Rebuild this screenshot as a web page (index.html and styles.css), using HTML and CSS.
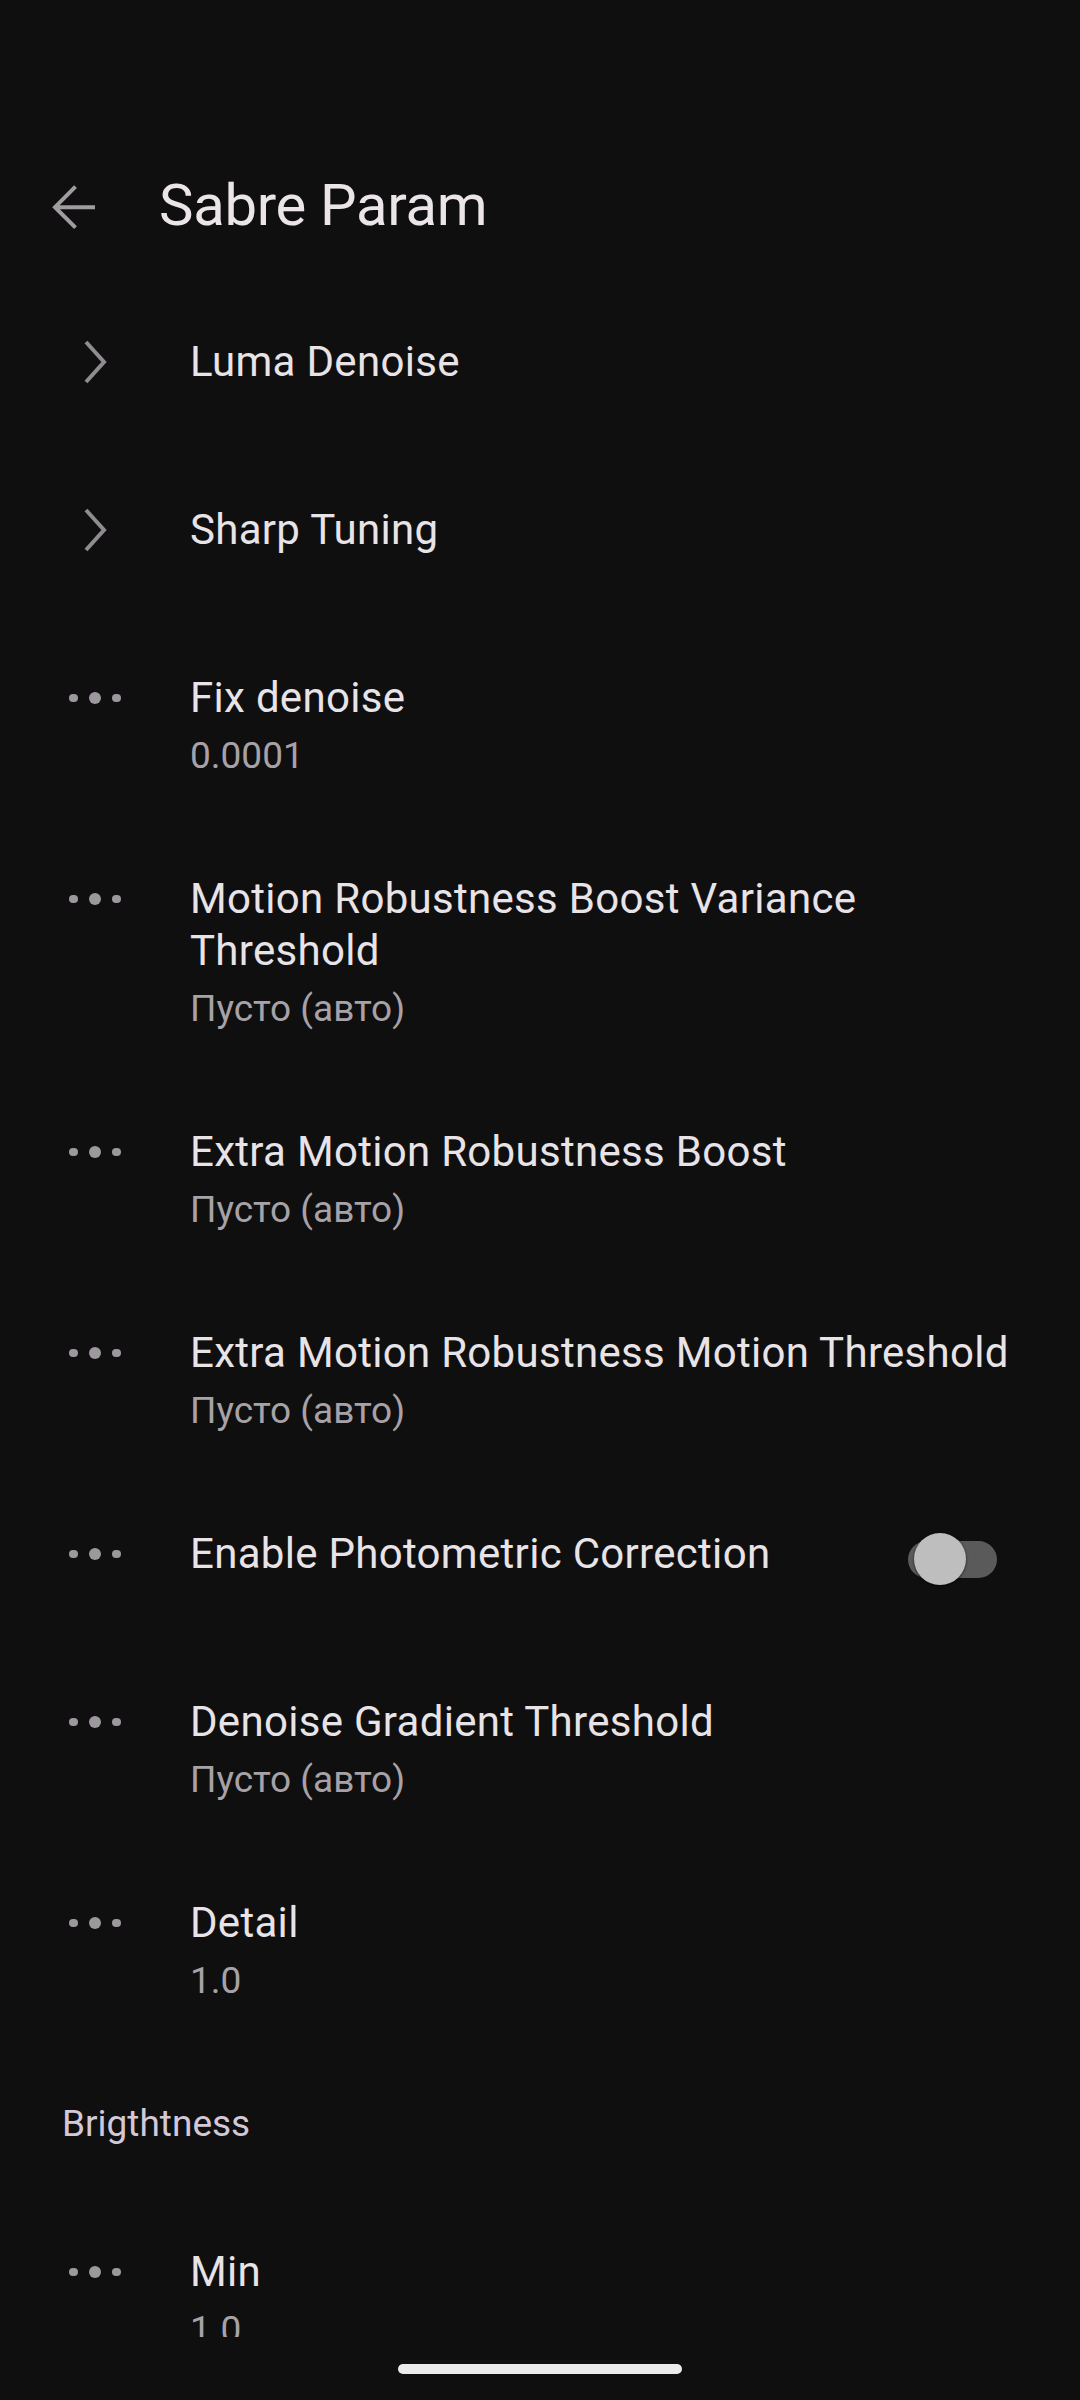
FILE: index.html
```html
<!DOCTYPE html>
<html lang="ru">
<head>
<meta charset="utf-8">
<title>Sabre Param</title>
<link rel="stylesheet" href="styles.css">
</head>
<body>
<div class="screen">
  <header class="appbar">
    <div class="toolbar">
      <div class="back">
        <svg width="63" height="63" viewBox="0 0 63 63"><path d="M53 33.2H13M33.5 12.7L13 33.2L33.5 53.7" fill="none" stroke="#a09ca2" stroke-width="4"/></svg>
      </div>
      <h1 class="title">Sabre Param</h1>
    </div>
  </header>
  <main class="list">
    <div class="item">
      <div class="icon"><svg class="chev" width="30" height="52" viewBox="0 0 30 52"><path d="M6 6L24 26L6 46" fill="none" stroke="#8f8b90" stroke-width="4"/></svg></div>
      <div class="text"><div class="t">Luma Denoise</div></div>
    </div>
    <div class="item">
      <div class="icon"><svg class="chev" width="30" height="52" viewBox="0 0 30 52"><path d="M6 6L24 26L6 46" fill="none" stroke="#8f8b90" stroke-width="4"/></svg></div>
      <div class="text"><div class="t">Sharp Tuning</div></div>
    </div>
    <div class="item two">
      <div class="icon"><span class="dots"><i></i><b></b><i></i></span></div>
      <div class="text"><div class="t">Fix denoise</div><div class="s">0.0001</div></div>
    </div>
    <div class="item two">
      <div class="icon"><span class="dots"><i></i><b></b><i></i></span></div>
      <div class="text"><div class="t">Motion Robustness Boost Variance Threshold</div><div class="s">Пусто (авто)</div></div>
    </div>
    <div class="item two">
      <div class="icon"><span class="dots"><i></i><b></b><i></i></span></div>
      <div class="text"><div class="t">Extra Motion Robustness Boost</div><div class="s">Пусто (авто)</div></div>
    </div>
    <div class="item two">
      <div class="icon"><span class="dots"><i></i><b></b><i></i></span></div>
      <div class="text"><div class="t">Extra Motion Robustness Motion Threshold</div><div class="s">Пусто (авто)</div></div>
    </div>
    <div class="item">
      <div class="icon"><span class="dots"><i></i><b></b><i></i></span></div>
      <div class="text"><div class="t">Enable Photometric Correction</div></div>
      <div class="switch"><span class="track"></span><span class="thumb"></span></div>
    </div>
    <div class="item two">
      <div class="icon"><span class="dots"><i></i><b></b><i></i></span></div>
      <div class="text"><div class="t">Denoise Gradient Threshold</div><div class="s">Пусто (авто)</div></div>
    </div>
    <div class="item two">
      <div class="icon"><span class="dots"><i></i><b></b><i></i></span></div>
      <div class="text"><div class="t">Detail</div><div class="s">1.0</div></div>
    </div>
    <div class="category">Brigthtness</div>
    <div class="item two">
      <div class="icon"><span class="dots"><i></i><b></b><i></i></span></div>
      <div class="text"><div class="t">Min</div><div class="s">1.0</div></div>
    </div>
  </main>
  <footer class="navbar"><span class="handle"></span></footer>
</div>
</body>
</html>
```
FILE: styles.css
```css
html, body {
  margin: 0;
  padding: 0;
  background: #0f0f0f;
}
body {
  width: 1080px;
  height: 2400px;
  overflow: hidden;
  font-family: Roboto, "Noto Sans", sans-serif;
  color: #e8e3e7;
}
.screen {
  display: flex;
  flex-direction: column;
  height: 2400px;
}
.appbar {
  height: 278px;
  padding-top: 142px;
  box-sizing: border-box;
  flex: none;
}
.toolbar {
  height: 126px;
  display: flex;
  align-items: center;
}
.back {
  width: 63px;
  height: 63px;
  margin-left: 42px;
  display: flex;
}
.title {
  margin: 0 0 0 54px;
  font-size: 58px;
  font-weight: 400;
  line-height: 126px;
  letter-spacing: -0.3px;
  color: #ebe5e9;
}
.list {
  flex: 1;
  overflow: hidden;
}
.item {
  display: flex;
  align-items: flex-start;
  padding: 58px 42px 58px 0;
}
.item.two {
  padding-bottom: 33px;
}
.icon {
  width: 190px;
  height: 52px;
  flex: none;
  display: flex;
  align-items: center;
  justify-content: center;
}
.chev {
  display: block;
}
.dots {
  display: flex;
  align-items: center;
  gap: 11px;
}
.dots i {
  width: 8.5px;
  height: 8.5px;
  border-radius: 50%;
  background: #9c989e;
}
.dots b {
  width: 12.5px;
  height: 12.5px;
  border-radius: 50%;
  background: #9c989e;
}
.text {
  flex: 1;
  min-width: 0;
}
.t {
  font-size: 42px;
  line-height: 52px;
  letter-spacing: 0.3px;
  color: #e8e3e7;
}
.s {
  font-size: 37px;
  line-height: 52px;
  margin-top: 6px;
  color: #a7a2a7;
}
.switch {
  position: relative;
  width: 89px;
  height: 52px;
  margin: 5px 41px -5px 0;
  flex: none;
}
.track {
  position: absolute;
  left: 0;
  top: 7.5px;
  width: 89px;
  height: 37px;
  border-radius: 18.5px;
  background: #5a5a5a;
}
.thumb {
  position: absolute;
  left: 6px;
  top: 0;
  width: 52px;
  height: 52px;
  border-radius: 50%;
  background: #bebebe;
  box-shadow: 0 1px 3px rgba(0, 0, 0, 0.6);
}
.category {
  padding: 58px 0 38px 62px;
  font-size: 37px;
  line-height: 52px;
  color: #d3c8d8;
}
.navbar {
  height: 63px;
  flex: none;
  display: flex;
  align-items: center;
  justify-content: center;
}
.handle {
  width: 284px;
  height: 10px;
  border-radius: 5px;
  background: #ebebeb;
  margin-top: 1px;
}
```
